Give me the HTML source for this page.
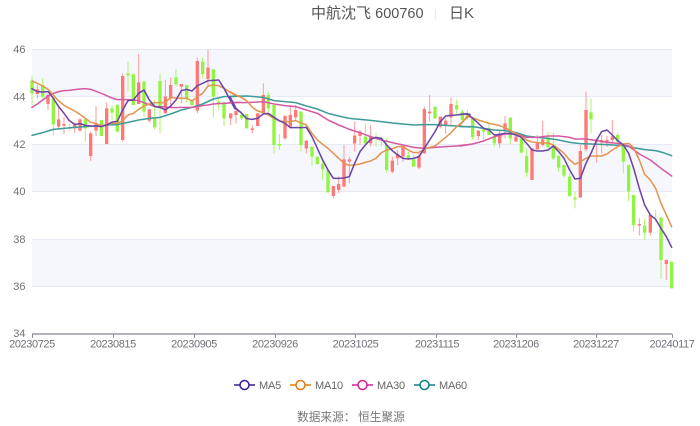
<!DOCTYPE html>
<html><head><meta charset="utf-8"><style>
html,body{margin:0;padding:0;background:#fff}
svg{display:block}
text{font-family:"Liberation Sans","Noto Sans CJK SC",sans-serif}
</style></head><body>
<svg width="700" height="426" viewBox="0 0 700 426" xmlns="http://www.w3.org/2000/svg">
<rect width="700" height="426" fill="#fff"/>
<g fill="#f5f7fc"><rect x="32" y="49" width="640" height="47.7"/><rect x="32" y="144" width="640" height="47.5"/><rect x="32" y="239" width="640" height="47.4"/></g>
<path d="M32 49.5H672M32 96.5H672M32 144.5H672M32 191.5H672M32 239.5H672M32 286.5H672" stroke="#e6eaf5" stroke-width="1" fill="none"/>
<path d="M32 334H672" stroke="#9a9aa6" stroke-width="1.500" fill="none"/>
<path d="M32.500 334V338M113.500 334V338M194.500 334V338M275.500 334V338M355.500 334V338M436.500 334V338M516.500 334V338M596.500 334V338M672.500 334V338" stroke="#8f8f9c" stroke-width="1" fill="none"/>

<g font-size="11" fill="#707078" text-anchor="end"><text x="25.500" y="53">46</text><text x="25.500" y="100.500">44</text><text x="25.500" y="148">42</text><text x="25.500" y="195">40</text><text x="25.500" y="243">38</text><text x="25.500" y="290">36</text><text x="25.500" y="337">34</text></g>
<g font-size="11" fill="#707078" text-anchor="middle" letter-spacing="-.4"><text x="32" y="347.500">20230725</text><text x="113" y="347.500">20230815</text><text x="194" y="347.500">20230905</text><text x="275" y="347.500">20230926</text><text x="355.500" y="347.500">20231025</text><text x="437" y="347.500">20231115</text><text x="516" y="347.500">20231206</text><text x="596" y="347.500">20231227</text><text x="672" y="347.500">20240117</text></g>

<!-- left segment -->
<g transform="translate(0,30) scale(.33333)" fill="none">
<path stroke="#ff9a9a" stroke-width="3" d="M112 165V205M144 190V240M176 230V295M192 260V312M224 278V308M240 265V305M272 305V393M288 228V318M320 217V343M368 130V335M416 72V222M448 235V278M496 150V250M512 143V235M544 162V220M592 82V250M624 58V165"/>
<path stroke="#ff7878" stroke-width="10" d="M112 178V192M144 195V222M176 268V290M192 282V287M224 285V295M240 268V302M272 310V378M288 280V302M320 235V342M368 138V330M416 157V222M448 238V272M496 200V250M512 165V205M544 162V170M592 93V242M624 113V147"/>
<path stroke="#aaf56c" stroke-width="3" d="M96 138V225M128 145V205M160 195V317M208 280V302M256 268V335M304 270V318M336 225V270M352 222V306M384 95V185M400 130V225M432 152V260M464 210V298M480 130V310M528 118V170M560 165V218M576 208V228M608 82V145M640 115V262M656 205V240M672 215V288"/>
<path stroke="#90f440" stroke-width="10" d="M96 152V190M128 165V200M160 205V283M208 292V296M256 268V295M304 270V318M336 235V248M352 225V305M384 130V136M400 133V225M432 155V245M464 265V292M480 153V235M528 142V163M560 165V207M576 212V225M608 95V132M640 118V200M656 215V220M672 217V265"/>
</g>
<!-- middle segment -->
<g transform="translate(230,30) scale(.33333)" fill="none">
<path stroke="#ff9a9a" stroke-width="3" d="M2 250V285M18 243V280M67 285V310M83 250V288M100 160V250M165 255V330M181 225V290M197 225V270M229 332V370M310 468V505M326 440V490M342 345V472M358 380V460M374 275V365M390 300V345M422 285V350M487 380V430M503 360V405M519 345V395M567 365V418M583 230V372M599 195V275M631 260V295M647 265V312M663 202V290"/>
<path stroke="#ff7878" stroke-width="10" d="M2 250V265M18 243V255M67 295V300M83 250V288M100 195V250M165 258V325M181 255V290M197 240V262M229 332V355M310 468V498M326 462V480M342 388V470M358 388V395M374 317V340M390 305V318M422 320V340M487 392V425M503 372V385M519 348V380M567 378V413M583 237V370M599 245V250M631 260V290M647 272V288M663 222V262"/>
<path stroke="#aaf56c" stroke-width="3" d="M35 245V270M50 252V295M115 185V245M132 225V370M148 312V360M213 245V365M246 350V408M262 380V405M278 390V448M294 420V487M406 280V345M438 310V350M454 320V350M470 325V428M535 365V390M551 375V410M615 230V267M680 210V255"/>
<path stroke="#90f440" stroke-width="10" d="M35 255V265M50 252V295M115 195V235M132 225V345M148 342V347M213 245V345M246 350V380M262 380V402M278 402V418M294 420V487M406 320V340M438 322V326M454 325V330M470 345V420M535 375V385M551 388V410M615 230V265M680 225V238"/>
</g>
<!-- right segment -->
<g transform="translate(460,80) scale(.33333)" fill="none">
<path stroke="#ff9a9a" stroke-width="3" d="M55 150V180M119 150V203M135 108V175M168 160V185M216 205V300M232 165V210M248 122V200M361 195V353M378 35V215M410 175V248M425 165V220M441 168V200M457 120V190M538 415V467M571 405V467M619 538V600"/>
<path stroke="#ff7878" stroke-width="10" d="M55 152V168M119 160V190M135 130V150M168 170V185M216 205V300M232 188V208M248 178V195M361 213V353M378 90V208M410 178V185M425 180V188M441 180V190M457 170V180M538 432V436M571 405V458M619 540V552"/>
<path stroke="#aaf56c" stroke-width="3" d="M7 88V125M22 90V120M38 110V178M71 145V180M87 125V165M103 165V200M151 113V192M184 165V218M200 205V290M264 155V205M280 158V240M296 225V275M312 255V292M329 280V350M345 335V385M393 55V160M473 158V190M490 188V280M506 255V365M521 345V455M554 415V480M587 390V425M603 412V597M635 545V625"/>
<path stroke="#90f440" stroke-width="10" d="M7 95V120M22 100V112M38 112V172M71 148V155M87 145V165M103 170V190M151 113V175M184 175V218M200 228V278M264 172V202M280 200V235M296 228V263M312 255V287M329 290V348M345 353V358M393 97V118M473 165V185M490 195V245M506 255V335M521 345V435M554 437V458M603 412V540M635 545V625"/>
</g>

<!-- moving averages -->
<g fill="none" stroke-linejoin="round" stroke-linecap="round" stroke-width="4.6">
<g transform="translate(0,30) scale(.33333)">
<polyline stroke="#3f9a9a" points="96,316 128,308 160,298 192,295 224,292 256,290 288,288 320,285 352,284 384,277 416,270 448,265 480,262 512,252 544,240 576,232 608,222 640,207 672,200 720,198"/>
<polyline stroke="#d65aa2" points="96,232 112,222 128,210 144,198 160,190 176,185 192,182 208,181 224,179 240,177 256,176 272,178 288,184 304,190 320,197 336,204 352,209 368,209 384,209 400,210 416,212 432,218 448,224 464,229 480,230 496,231 512,232 528,233 544,232 560,232 576,232 592,230 608,227 624,225 640,222 656,221 672,220 688,219 704,218 720,217"/>
<polyline stroke="#e49450" points="96,153 112,160 128,168 144,178 160,195 176,213 192,226 208,235 224,243 240,253 256,265 272,277 288,280 304,288 320,283 336,280 352,280 368,272 384,255 400,250 416,238 432,228 448,222 464,218 480,218 496,218 512,202 528,204 544,205 560,205 576,213 592,200 608,190 624,168 640,165 656,167 672,175 688,185 704,195 720,200"/>
<polyline stroke="#6c45a5" points="96,176 112,185 128,186 145,185 160,205 176,230 192,250 208,272 224,283 240,281 256,286 272,288 288,288 304,290 320,285 336,276 352,274 368,240 384,212 400,210 416,190 432,180 448,210 464,230 480,232 496,240 512,228 528,210 544,182 560,178 576,183 592,167 608,160 624,152 640,151 656,150 672,175 688,205 704,235 720,245"/>
</g>
<g transform="translate(230,30) scale(.33333)">
<polyline stroke="#3f9a9a" points="0,200 50,198 100,202 132,212 165,215 197,218 229,228 262,237 294,250 326,258 358,265 390,268 422,271 454,275 487,279 519,282 551,285 583,284 615,284 647,286 680,288 720,291"/>
<polyline stroke="#d65aa2" points="0,217 50,218 100,215 132,222 165,227 197,230 229,240 262,250 294,270 326,285 358,298 390,308 422,320 454,330 487,338 519,345 551,352 583,355 615,352 647,350 680,348 720,343"/>
<polyline stroke="#e49450" points="0,185 18,195 35,203 50,212 67,232 83,243 100,248 115,255 132,265 148,273 165,275 181,275 197,272 213,278 229,285 246,310 262,330 278,343 294,355 310,370 326,385 342,400 358,406 374,405 390,402 406,397 422,393 438,385 454,368 470,360 487,356 503,350 519,350 535,360 551,368 567,367 583,358 599,352 615,348 631,335 647,322 663,308 680,290 695,278 711,263 720,258"/>
<polyline stroke="#6c45a5" points="0,200 18,235 35,250 50,266 67,268 83,265 100,252 115,250 132,262 148,272 165,280 181,293 197,293 213,293 229,292 246,320 262,355 278,390 294,420 310,445 326,445 342,444 358,440 374,400 390,365 406,345 422,328 438,322 454,325 470,345 487,362 503,375 519,385 535,387 551,385 567,380 583,355 599,330 615,305 631,275 647,258 663,256 680,255 695,253 711,252 720,253"/>
</g>
<g transform="translate(460,80) scale(.33333)">
<polyline stroke="#3f9a9a" points="0,140 38,140 71,145 103,150 135,152 168,158 200,168 232,172 264,175 296,180 329,187 361,191 393,192 425,193 457,195 490,197 521,203 554,209 587,212 610,218 635,227"/>
<polyline stroke="#d65aa2" points="0,198 38,192 71,183 103,170 135,162 168,162 200,172 232,172 264,168 296,168 329,172 345,177 378,177 410,182 441,187 473,190 506,198 538,222 571,240 603,265 635,288"/>
<polyline stroke="#e49450" points="0,135 22,108 38,113 55,120 71,125 87,130 103,133 119,137 135,143 151,152 168,160 184,170 200,180 216,186 232,188 248,189 264,189 280,195 296,207 312,220 329,240 345,253 361,245 378,235 393,228 410,228 425,228 441,222 457,210 473,200 490,192 506,190 521,203 538,240 554,283 571,300 587,325 603,370 619,405 635,440"/>
<polyline stroke="#6c45a5" points="0,103 22,101 38,115 55,130 71,145 87,150 103,165 119,163 135,160 151,160 168,165 184,172 200,190 216,210 232,213 248,213 264,210 280,198 296,215 312,235 329,270 345,297 361,295 378,250 393,220 410,180 425,155 441,150 457,165 473,182 490,195 506,220 521,265 538,325 554,375 571,405 587,418 603,445 619,470 635,502"/>
</g>
</g>

<!-- title -->
<text x="311" y="18" font-size="15" fill="#555">中航沈飞 <tspan font-size="14.500">600760</tspan></text>
<rect x="435" y="9" width="1" height="11" fill="#e8e8e8"/>
<text x="449" y="18" font-size="15" fill="#555">日K</text>

<!-- legend -->
<g fill="#fff" stroke-width="1.5">
<path d="M234 385H255" stroke="#3a1a9c"/><circle cx="244.500" cy="385" r="4.500" stroke="#3a1a9c"/>
<path d="M290 385H311" stroke="#e07a10"/><circle cx="300.500" cy="385" r="4.500" stroke="#e07a10"/>
<path d="M352 385H373" stroke="#d8208f"/><circle cx="362.500" cy="385" r="4.500" stroke="#d8208f"/>
<path d="M414 385H435" stroke="#0f7f80"/><circle cx="424.500" cy="385" r="4.500" stroke="#0f7f80"/>
</g>
<g font-size="11" fill="#666" letter-spacing="-.2"><text x="259" y="389">MA5</text><text x="315" y="389">MA10</text><text x="377" y="389">MA30</text><text x="439" y="389">MA60</text></g>
<text x="297" y="421" font-size="11.700" fill="#777">数据来源：</text>
<text x="358" y="421" font-size="11.700" fill="#777">恒生聚源</text>
</svg>
</body></html>
